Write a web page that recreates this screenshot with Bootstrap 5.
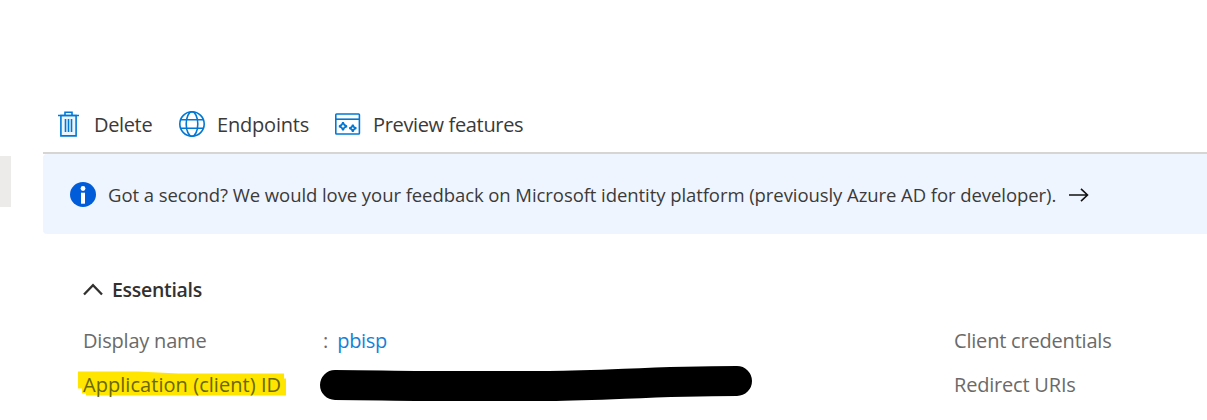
<!DOCTYPE html>
<html lang="en">
<head>
<meta charset="utf-8">
<meta name="viewport" content="width=device-width, initial-scale=1">
<title>App registration</title>
<link href="https://cdn.jsdelivr.net/npm/bootstrap@5.3.0/dist/css/bootstrap.min.css" rel="stylesheet">
<style>
body{font-family:"Open Sans","Noto Sans",sans-serif;font-size:20px;line-height:28px;color:#3b3a39;background:#fff;overflow:hidden;height:420px}
svg{display:block;flex:none}
.rail{width:43px;padding-top:156px}
.rail-item{width:11px;height:51px;background:#edebe9}
.toolbar{height:154px;padding:0 0 13px 14px;border-bottom:2px solid #d6d5d4}
.tool{border:0;background:none;padding:0;color:inherit;height:28px}
.notice{height:80px;padding:2px 0 0 26px;background:#eff5ff;border-radius:4px 0 0 4px;font-size:18.5px}
.heading{font-size:19.5px;font-weight:600;color:#323130;letter-spacing:-.3px}
.details{padding:41px 0 0 40px}
.field{height:44px;color:#6b6a69}
.name{width:240px}
.value{width:631px}
.marker{left:-5px;top:-1px;z-index:0}
.label{position:relative;z-index:1}
.on-marker{color:#696800;letter-spacing:.05px}
.l1{letter-spacing:-.2px}.l3{letter-spacing:-.35px}.l4{letter-spacing:-.07px}
</style>
</head>
<body>
<div class="d-flex">
  <aside class="rail flex-shrink-0"><div class="rail-item"></div></aside>
  <main class="flex-grow-1">
    <div class="toolbar d-flex align-items-end">
      <button class="tool d-flex align-items-center" style="width:121px">
        <svg width="24" height="28" viewBox="0 0 24 28" fill="none" stroke="#0078d4" stroke-width="1.6"><path fill="#edf6fd" d="M3.9 4.5h15.2v20.4H3.9z"/><path d="M1 4.5h21M8 4V1.2h7V4M8.5 8v13M11.5 8v13M14.5 8v13"/></svg>
        <span class="l3" style="margin-left:13px">Delete</span>
      </button>
      <button class="tool d-flex align-items-center" style="width:156px">
        <svg width="28" height="28" viewBox="0 0 28 28" fill="none" stroke="#0078d4" stroke-width="1.6"><circle cx="14" cy="13" r="12.2"/><ellipse cx="14" cy="13" rx="5.8" ry="12.2"/><path d="M3 8.8h22M3 17.2h22"/></svg>
        <span class="l1" style="margin-left:11px">Endpoints</span>
      </button>
      <button class="tool d-flex align-items-center">
        <svg width="28" height="28" viewBox="0 0 28 28" fill="none" stroke="#0078d4" stroke-width="1.6"><rect x="1.8" y="3" width="23.6" height="20" rx=".8"/><path d="M2 8.2h23"/><path stroke-width="1.7" d="M9 11.2Q9.6 14.7 13.1 15.3 9.6 15.9 9 19.4 8.4 15.9 4.9 15.3 8.4 14.7 9 11.2zM18.8 13.6Q19.3 16.7 22.4 17.2 19.3 17.7 18.8 20.8 18.3 17.7 15.2 17.2 18.3 16.7 18.8 13.6z"/></svg>
        <span class="l3" style="margin-left:11px">Preview features</span>
      </button>
    </div>
    <div class="notice d-flex align-items-center" role="status">
      <svg width="27" height="26" viewBox="0 0 27 26"><ellipse cx="14" cy="12.5" rx="13" ry="12.5" fill="#015cda"/><circle cx="14" cy="6.5" r="2.4" fill="#fff"/><path fill="#fff" d="M12 10.7h4v11h-4z"/></svg>
      <span class="l4 text-nowrap" style="margin-left:12px">Got a second? We would love your feedback on Microsoft identity platform (previously Azure AD for developer).</span>
      <svg style="margin-left:12px" width="22" height="16" viewBox="0 0 22 16" fill="none" stroke="#111" stroke-width="1.6"><path d="M1 8h18.5M13 1.8 19.5 8 13 14.2"/></svg>
    </div>
    <section class="details">
      <div class="d-flex align-items-center heading" style="height:29px;margin-bottom:23px">
        <svg width="20" height="14" viewBox="0 0 20 14" fill="none" stroke="#323130" stroke-width="2.3"><path d="M1 11.5 10 2.2l9 9.3"/></svg>
        <span style="margin-left:9px">Essentials</span>
      </div>
      <div class="field d-flex">
        <span class="name l1">Display name</span>
        <span class="value"><span>:</span><a class="text-decoration-none l3" style="color:#1382d9;margin-left:9px" href="#">pbisp</a></span>
        <span class="l1 text-nowrap">Client credentials</span>
      </div>
      <div class="field d-flex">
        <span class="name position-relative">
          <svg class="marker position-absolute" width="210" height="28" viewBox="0 0 210 28"><path fill="#ffe500" d="M0 1.5h60l40 2h106v5h2v17H8v-2H4v-5H0z"/></svg>
          <span class="label on-marker text-nowrap">Application (client) ID</span>
        </span>
        <span class="value"><svg style="margin:-6px 0 0 -4px" width="434" height="37" viewBox="0 0 434 37"><path d="M16 20C55 20 70 21 105 21H230C290 21 330 16 418 16" fill="none" stroke="#000" stroke-width="30" stroke-linecap="round"/></svg></span>
        <span class="l1 text-nowrap">Redirect URIs</span>
      </div>
    </section>
  </main>
</div>
<script src="https://cdn.jsdelivr.net/npm/bootstrap@5.3.0/dist/js/bootstrap.bundle.min.js"></script>
</body>
</html>
